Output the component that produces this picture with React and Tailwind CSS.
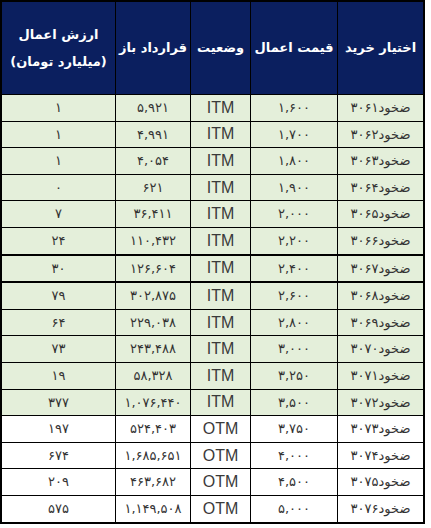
import React from "react";

const rows = [
  ["ضخود۳۰۶۱", "۱,۶۰۰", "ITM", "۵,۹۲۱", "۱"],
  ["ضخود۳۰۶۲", "۱,۷۰۰", "ITM", "۴,۹۹۱", "۱"],
  ["ضخود۳۰۶۳", "۱,۸۰۰", "ITM", "۴,۰۵۴", "۱"],
  ["ضخود۳۰۶۴", "۱,۹۰۰", "ITM", "۶۲۱", "۰"],
  ["ضخود۳۰۶۵", "۲,۰۰۰", "ITM", "۳۶,۴۱۱", "۷"],
  ["ضخود۳۰۶۶", "۲,۲۰۰", "ITM", "۱۱۰,۴۳۲", "۲۴"],
  ["ضخود۳۰۶۷", "۲,۴۰۰", "ITM", "۱۲۶,۶۰۴", "۳۰"],
  ["ضخود۳۰۶۸", "۲,۶۰۰", "ITM", "۳۰۲,۸۷۵", "۷۹"],
  ["ضخود۳۰۶۹", "۲,۸۰۰", "ITM", "۲۲۹,۰۳۸", "۶۴"],
  ["ضخود۳۰۷۰", "۳,۰۰۰", "ITM", "۲۴۳,۴۸۸", "۷۳"],
  ["ضخود۳۰۷۱", "۳,۲۵۰", "ITM", "۵۸,۳۲۸", "۱۹"],
  ["ضخود۳۰۷۲", "۳,۵۰۰", "ITM", "۱,۰۷۶,۴۴۰", "۳۷۷"],
  ["ضخود۳۰۷۳", "۳,۷۵۰", "OTM", "۵۲۴,۴۰۳", "۱۹۷"],
  ["ضخود۳۰۷۴", "۴,۰۰۰", "OTM", "۱,۶۸۵,۶۵۱", "۶۷۴"],
  ["ضخود۳۰۷۵", "۴,۵۰۰", "OTM", "۴۶۳,۶۸۲", "۲۰۹"],
  ["ضخود۳۰۷۶", "۵,۰۰۰", "OTM", "۱,۱۴۹,۵۰۸", "۵۷۵"],
];

const headers = ["اختیار خرید", "قیمت اعمال", "وضعیت", "قرارداد باز"];

export default function App() {
  return (
    <div className="w-[431px] h-[528px] bg-white">
      <div
        dir="rtl"
        className="w-[425px] bg-black p-[2px] flex flex-col gap-px"
        style={{ fontFamily: '"DejaVu Sans", sans-serif' }}
      >
        <div className="grid grid-cols-[85px_86px_59px_74px_113px] gap-px h-[92px]">
          {headers.map((h) => (
            <div
              key={h}
              className="bg-[#0b1f5f] text-white font-bold text-[13px] flex items-center justify-center whitespace-nowrap"
            >
              {h}
            </div>
          ))}
          <div className="bg-[#0b1f5f] text-white font-bold text-[13px] flex flex-col items-center justify-center leading-[27px]">
            <span>ارزش اعمال</span>
            <span>(میلیارد تومان)</span>
          </div>
        </div>
        {rows.map((r, i) => {
          const itm = r[2] === "ITM";
          const bg = itm ? "bg-[#e4efda]" : "bg-white";
          const extra = i === 6 || i === 7 ? "mt-px" : "";
          return (
            <div
              key={i}
              className={`grid grid-cols-[85px_86px_59px_74px_113px] gap-px h-[25.6px] ${extra}`}
            >
              <div className={`${bg} text-[#333] text-[13px] flex items-center justify-center whitespace-nowrap`}>
                {r[0]}
              </div>
              <div className={`${bg} text-[#333] text-[13px] flex items-center justify-center`}>
                {r[1]}
              </div>
              <div
                className={`${bg} text-[#3a3a3a] text-[16px] flex items-center justify-center`}
                style={{ fontFamily: '"Liberation Sans", sans-serif' }}
              >
                {r[2]}
              </div>
              <div className={`${bg} text-[#333] text-[13px] flex items-center justify-center`}>
                {r[3]}
              </div>
              <div className={`${bg} text-[#333] text-[13px] flex items-center justify-center`}>
                {r[4]}
              </div>
            </div>
          );
        })}
      </div>
    </div>
  );
}
